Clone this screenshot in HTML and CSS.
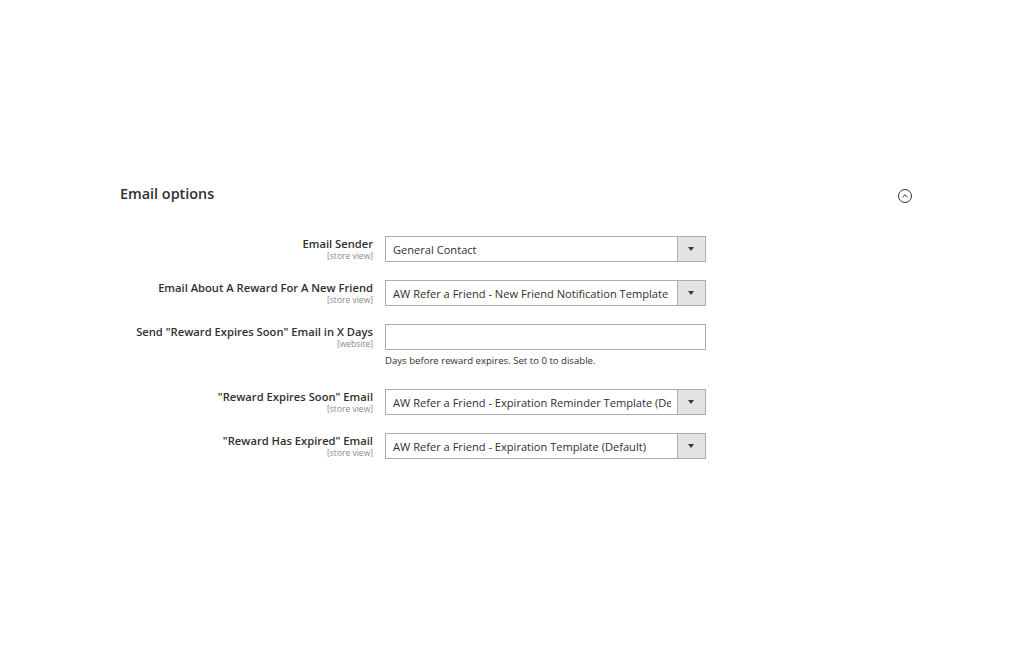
FILE: index.html
```html
<!DOCTYPE html>
<html lang="en">
<head>
    <meta charset="UTF-8">
    <title>Email options</title>
    <link rel="stylesheet" href="styles.css">
</head>
<body>
    <div class="section">
        <div class="section-head">
            <h2>Email options</h2>
            <svg class="toggle" width="16" height="16" viewBox="0 0 16 16">
                <circle cx="8" cy="8" r="6.5" fill="none" stroke="#303030" stroke-width="1"/>
                <path d="M5.5 9.2 L8 6.8 L10.5 9.2" fill="none" stroke="#303030" stroke-width="1"/>
            </svg>
        </div>

        <div class="form">
            <div class="row">
                <div class="label">
                    <span class="name">Email Sender</span>
                    <span class="scope">[store view]</span>
                </div>
                <div class="field">
                    <div class="select"><span class="value">General Contact</span><span class="arrow"></span></div>
                </div>
            </div>

            <div class="row">
                <div class="label">
                    <span class="name">Email About A Reward For A New Friend</span>
                    <span class="scope">[store view]</span>
                </div>
                <div class="field">
                    <div class="select"><span class="value">AW Refer a Friend - New Friend Notification Template</span><span class="arrow"></span></div>
                </div>
            </div>

            <div class="row">
                <div class="label">
                    <span class="name">Send "Reward Expires Soon" Email in X Days</span>
                    <span class="scope">[website]</span>
                </div>
                <div class="field">
                    <div class="input"></div>
                    <p class="note">Days before reward expires. Set to 0 to disable.</p>
                </div>
            </div>

            <div class="row">
                <div class="label">
                    <span class="name">"Reward Expires Soon" Email</span>
                    <span class="scope">[store view]</span>
                </div>
                <div class="field">
                    <div class="select"><span class="value">AW Refer a Friend - Expiration Reminder Template (Default)</span><span class="arrow"></span></div>
                </div>
            </div>

            <div class="row">
                <div class="label">
                    <span class="name">"Reward Has Expired" Email</span>
                    <span class="scope">[store view]</span>
                </div>
                <div class="field">
                    <div class="select"><span class="value">AW Refer a Friend - Expiration Template (Default)</span><span class="arrow"></span></div>
                </div>
            </div>
        </div>
    </div>
</body>
</html>
```

FILE: styles.css
```css
body {
    margin: 0;
    font-family: "Open Sans", Arial, sans-serif;
    color: #303030;
    background: #fff;
}
.section {
    width: 793px;
    padding: 183px 0 0 120px;
}
.section-head {
    display: flex;
    justify-content: space-between;
    align-items: center;
    height: 21px;
}
.section-head h2 {
    margin: 0;
    font-size: 14.4px;
    font-weight: 600;
    color: #303030;
}
.toggle {
    margin-top: 4px;
}
.form {
    padding-top: 32px;
}
.row {
    display: flex;
    margin-bottom: 18px;
}
.label {
    width: 253px;
    margin-right: 12px;
    text-align: right;
    padding-top: 1px;
}
.name {
    display: block;
    font-size: 11.2px;
    font-weight: 600;
    line-height: 14px;
}
.scope {
    display: block;
    font-size: 8.5px;
    line-height: 10px;
    color: #8a8a8a;
}
.field {
    width: 321px;
}
.select, .input {
    box-sizing: border-box;
    height: 26px;
    border: 1px solid #adadad;
    background: #fff;
}
.select {
    display: flex;
}
.value {
    flex: 1;
    overflow: hidden;
    white-space: nowrap;
    font-size: 11.1px;
    line-height: 25px;
    padding-left: 7px;
    margin-right: 6px;
}
.arrow {
    width: 27px;
    background: #e3e3e3;
    border-left: 1px solid #adadad;
    position: relative;
}
.arrow::after {
    content: "";
    position: absolute;
    left: 10px;
    top: 10px;
    border-left: 3.5px solid transparent;
    border-right: 3.5px solid transparent;
    border-top: 4px solid #41362f;
}
.note {
    margin: 5px 0 4px;
    font-size: 9.6px;
    line-height: 12px;
}
```
